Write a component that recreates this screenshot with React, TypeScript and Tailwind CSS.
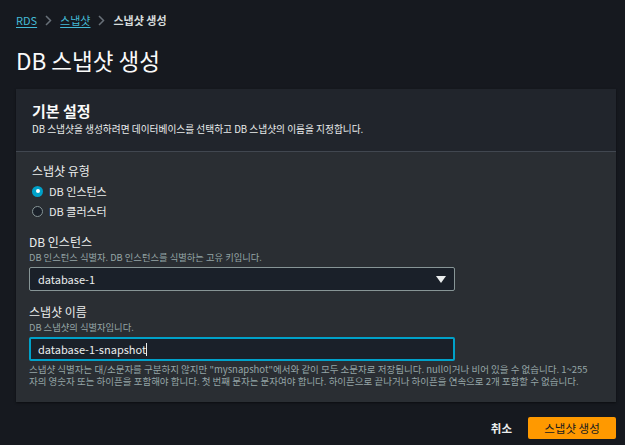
import { FC } from "react";

const Field: FC<{ label: string; desc: string; children: React.ReactNode }> = ({ label, desc, children }) => (
  <div className="flex flex-col">
    <div className="text-[12px] leading-[18px] text-[#eaeded]">{label}</div>
    <div className="text-[9.3px] leading-[12px] text-[#95a5a6]">{desc}</div>
    <div className="mt-[4px]">{children}</div>
  </div>
);

const Radio: FC<{ checked?: boolean; label: string }> = ({ checked, label }) => (
  <label className="flex items-center gap-[6px] h-[20px]">
    {checked ? (
      <span className="w-[11px] h-[11px] rounded-full bg-[#00a1c9] flex items-center justify-center">
        <span className="w-[4px] h-[4px] rounded-full bg-white" />
      </span>
    ) : (
      <span className="w-[11px] h-[11px] rounded-full border border-[#879596] bg-[#1a2029]" />
    )}
    <span className="text-[11px] leading-[20px] text-[#eaeded]">{label}</span>
  </label>
);

const Chevron = () => (
  <svg className="mx-[8px]" width="7" height="11" viewBox="0 0 7 11">
    <path d="M1 1l4.5 4.5L1 10" stroke="#687078" strokeWidth="1.5" fill="none" />
  </svg>
);

export default function App() {
  return (
    <div
      className="w-[625px] h-[445px] bg-[#16191f] overflow-hidden pl-[16px] pr-[9px]"
      style={{ fontFamily: '"Noto Sans CJK KR", "Noto Sans", sans-serif' }}
    >
      <nav className="flex items-center h-[20px] mt-[10px] text-[11px] leading-[20px]">
        <span className="text-[#44b9d6] underline underline-offset-2">RDS</span>
        <Chevron />
        <span className="text-[#44b9d6] underline underline-offset-2">스냅샷</span>
        <Chevron />
        <span className="text-[#d5dbdb] font-bold">스냅샷 생성</span>
      </nav>
      <h1 className="text-[22.5px] leading-[30px] text-[#fafafa] mt-[15px]">DB 스냅샷 생성</h1>

      <section className="mt-[14px] bg-[#2a2e33] shadow-[0_1px_2px_rgba(0,0,0,0.5)]">
        <header className="bg-[#21252c] px-[16px] pt-[12px] pb-[15px] border-b border-[#414750]">
          <h2 className="text-[15px] leading-[20px] font-bold text-[#fafafa]">기본 설정</h2>
          <p className="text-[9.7px] leading-[14px] text-[#eaeded] mt-[1px]">
            DB 스냅샷을 생성하려면 데이터베이스를 선택하고 DB 스냅샷의 이름을 지정합니다.
          </p>
        </header>
        <div className="px-[13px] pt-[10px] pb-[15px] flex flex-col gap-[12px]">
          <div className="pl-[3px]">
            <div className="text-[12px] leading-[18px] text-[#eaeded]">스냅샷 유형</div>
            <div className="mt-[1px]">
              <Radio checked label="DB 인스턴스" />
              <Radio label="DB 클러스터" />
            </div>
          </div>
          <Field label="DB 인스턴스" desc="DB 인스턴스 식별자. DB 인스턴스를 식별하는 고유 키입니다.">
            <div className="w-[426px] h-[24px] border border-[#879596] bg-[#1a2029] rounded-[2px] flex items-center justify-between pl-[8px] pr-[8px]">
              <span className="text-[11px] leading-[20px] text-[#eaeded]">database-1</span>
              <svg width="10" height="7" viewBox="0 0 10 7">
                <path d="M0 0h10L5 7z" fill="#eaeded" />
              </svg>
            </div>
          </Field>
          <div className="flex flex-col">
            <Field label="스냅샷 이름" desc="DB 스냅샷의 식별자입니다.">
              <div className="w-[426px] h-[24px] border-2 border-[#00a1c9] bg-[#1a2029] rounded-[2px] flex items-center pl-[7px]">
                <span className="text-[11px] leading-[20px] text-[#eaeded]">database-1-snapshot</span>
                <span className="w-px h-[13px] bg-[#eaeded]" />
              </div>
            </Field>
            <p className="text-[9.5px] leading-[12px] text-[#95a5a6] mt-[2px] whitespace-nowrap">
              <span className="block">
                스냅샷 식별자는 대/소문자를 구분하지 않지만 "mysnapshot"에서와 같이 모두 소문자로 저장됩니다. null이거나 비어 있을 수 없습니다. 1~255
              </span>
              <span className="block">
                자의 영숫자 또는 하이픈을 포함해야 합니다. 첫 번째 문자는 문자여야 합니다. 하이픈으로 끝나거나 하이픈을 연속으로 2개 포함할 수 없습니다.
              </span>
            </p>
          </div>
        </div>
      </section>

      <div className="flex justify-end items-center gap-[12px] mt-[15px]">
        <span className="text-[11.5px] leading-[20px] font-bold text-[#eaeded] px-[4px]">취소</span>
        <button className="h-[22px] w-[88px] bg-[#ff9900] rounded-[2px] text-[11.5px] leading-[20px] text-[#16191f]">
          스냅샷 생성
        </button>
      </div>
    </div>
  );
}
